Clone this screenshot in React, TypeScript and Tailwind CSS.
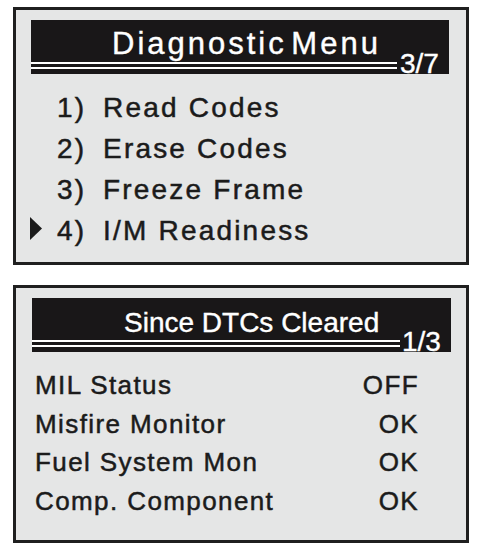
const font = { fontFamily: '"Liberation Sans", Arial, sans-serif' };

interface HeaderProps {
  title: string;
  page: string;
  titleClass: string;
  lineClass: string;
  pageClass: string;
  barClass: string;
}

const Header = ({ title, page, titleClass, lineClass, pageClass, barClass }: HeaderProps) => (
  <div className={`flex h-[54px] items-end bg-[#191718] text-white [-webkit-text-stroke:0.4px_white] ${barClass}`}>
    <div className={`flex h-full flex-col ${lineClass}`}>
      <div className={`flex-1 whitespace-nowrap ${titleClass}`}>{title}</div>
      <div className="h-[2px] bg-white" />
      <div className="mt-[3px] h-[2px] bg-white" />
      <div className="h-[5px]" />
    </div>
    <span className={`text-[28px] leading-[20px] ${pageClass}`}>{page}</span>
  </div>
);

const menu = ['Read Codes', 'Erase Codes', 'Freeze Frame', 'I/M Readiness'];

const status = [
  ['MIL Status', 'OFF'],
  ['Misfire Monitor', 'OK'],
  ['Fuel System Mon', 'OK'],
  ['Comp. Component', 'OK'],
];

export default function App() {
  return (
    <div className="min-h-screen bg-white pl-[13px] pt-[7px] text-[#1b1b1b]" style={font}>
      <div className="flex w-[456px] flex-col gap-[20px]">
        {/* diagnostic menu screen */}
        <div className="h-[258px] border-[3px] border-[#1f1f1f] bg-[#e5e6e6] pt-[10px]">
          <Header
            title="Diagnostic Menu"
            page="3/7"
            barClass="ml-[15px] w-[418px]"
            lineClass="w-[366px]"
            titleClass="pl-[81px] pt-[8px] text-[31px] leading-[31px] tracking-[3px] [word-spacing:-7px]"
            pageClass="pl-[3px]"
          />
          <div className="mt-[13px] text-[28px] leading-[41px] tracking-[2.2px] [-webkit-text-stroke:0.5px_#1b1b1b]">
            {menu.map((item, i) => (
              <div key={item} className="flex items-start">
                <div className="w-[41px]">
                  {i === 3 && (
                    <svg width="12" height="23" viewBox="0 0 12 23" className="ml-[14px] mt-[7px]">
                      <polygon points="0,0 12,11.5 0,23" fill="#1b1b1b" />
                    </svg>
                  )}
                </div>
                <span className="w-[46px]">{i + 1})</span>
                <span className="whitespace-nowrap">{item}</span>
              </div>
            ))}
          </div>
        </div>

        {/* since DTCs cleared screen */}
        <div className="h-[258px] border-[3px] border-[#1f1f1f] bg-[#e5e6e6] pt-[10px]">
          <Header
            title="Since DTCs Cleared"
            page="1/3"
            barClass="ml-[16px] w-[419px]"
            lineClass="w-[368px]"
            titleClass="pl-[92px] pt-[11px] text-[28px] leading-[28px]"
            pageClass="pl-[2px]"
          />
          <div className="mt-[14px] pl-[19px] pr-[47px] text-[26px] leading-[38.5px] tracking-[1.4px] [-webkit-text-stroke:0.5px_#1b1b1b]">
            {status.map(([label, value]) => (
              <div key={label} className="flex justify-between">
                <span>{label}</span>
                <span>{value}</span>
              </div>
            ))}
          </div>
        </div>
      </div>
    </div>
  );
}
